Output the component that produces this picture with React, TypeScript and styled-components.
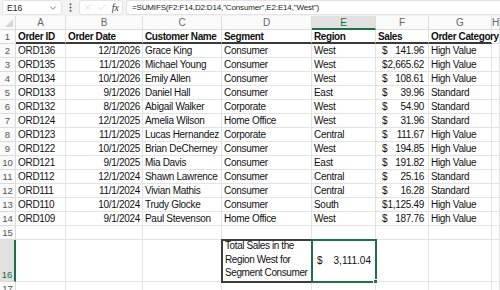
import React from 'react';
import styled, { createGlobalStyle } from 'styled-components';
import { ChevronDown, EllipsisVertical, X, Check } from 'lucide-react';

const GlobalStyle = createGlobalStyle`
  html, body {
    margin: 0;
    padding: 0;
    width: 500px;
    height: 290px;
    overflow: hidden;
    background: #ffffff;
  }
  * {
    box-sizing: border-box;
  }
`;

const COLUMNS = ['A', 'B', 'C', 'D', 'E', 'F', 'G', 'H'];

const ORDERS = [
  ['ORD136', '12/1/2026', 'Grace King', 'Consumer', 'West', '141.96', 'High Value'],
  ['ORD135', '11/1/2026', 'Michael Young', 'Consumer', 'West', '2,665.62', 'High Value'],
  ['ORD134', '10/1/2026', 'Emily Allen', 'Consumer', 'West', '108.61', 'High Value'],
  ['ORD133', '9/1/2026', 'Daniel Hall', 'Consumer', 'East', '39.96', 'Standard'],
  ['ORD132', '8/1/2026', 'Abigail Walker', 'Corporate', 'West', '54.90', 'Standard'],
  ['ORD124', '12/1/2025', 'Amelia Wilson', 'Home Office', 'West', '31.96', 'Standard'],
  ['ORD123', '11/1/2025', 'Lucas Hernandez', 'Corporate', 'Central', '111.67', 'High Value'],
  ['ORD122', '10/1/2025', 'Brian DeCherney', 'Consumer', 'West', '194.85', 'High Value'],
  ['ORD121', '9/1/2025', 'Mia Davis', 'Consumer', 'East', '191.82', 'High Value'],
  ['ORD112', '12/1/2024', 'Shawn Lawrence', 'Consumer', 'Central', '25.16', 'Standard'],
  ['ORD111', '11/1/2024', 'Vivian Mathis', 'Consumer', 'Central', '16.28', 'Standard'],
  ['ORD110', '10/1/2024', 'Trudy Glocke', 'Consumer', 'South', '1,125.49', 'High Value'],
  ['ORD109', '9/1/2024', 'Paul Stevenson', 'Home Office', 'West', '187.76', 'High Value'],
];

const HEADERS = ['Order ID', 'Order Date', 'Customer Name', 'Segment', 'Region', 'Sales', 'Order Category'];

const Frame = styled.div`
  display: flex;
  flex-direction: column;
  width: 500px;
  height: 290px;
  overflow: hidden;
  font-family: 'Liberation Sans', Arial, sans-serif;
  color: #1b1b1b;
`;

const FormulaBar = styled.div`
  display: flex;
  align-items: center;
  gap: 3px;
  height: 21px;
  padding: 0 0 1px 2px;
  background: #f3f3f3;
`;

const NameBox = styled.div`
  display: flex;
  align-items: center;
  justify-content: space-between;
  width: 60px;
  height: 15px;
  padding: 0 3px 0 4px;
  background: #ffffff;
  border: 1px solid #e3e3e3;
  border-radius: 3px;
  font-size: 8.5px;
  color: #222;
`;

const Dots = styled.div`
  display: flex;
  align-items: center;
  justify-content: center;
  width: 11px;
  color: #555;
`;

const FnButtons = styled.div`
  display: flex;
  align-items: center;
  gap: 4px;
  width: 44px;
  height: 15px;
  padding: 0 3px;
  background: #ffffff;
  border: 1px solid #e3e3e3;
  border-radius: 3px;
  color: #c4c4c4;
`;

const Fx = styled.span`
  font-family: 'Liberation Serif', 'Times New Roman', serif;
  font-style: italic;
  font-size: 10px;
  color: #333;
  margin-left: 1px;
`;

const FormulaInput = styled.div`
  flex: 1;
  display: flex;
  align-items: center;
  height: 15px;
  padding-left: 5px;
  background: #ffffff;
  border: 1px solid #e3e3e3;
  border-right: none;
  border-radius: 3px 0 0 3px;
  font-size: 8px;
  letter-spacing: -0.15px;
  color: #222;
  white-space: nowrap;
`;

const Sheet = styled.div`
  display: grid;
  grid-template-columns: 16px 50px 77px 79px 90px 64px 53px 63px 1fr;
  grid-template-rows: 14px repeat(15, 14px) 42px 14px;
  background: #ffffff;
  font-size: 10px;
`;

const Corner = styled.div`
  position: relative;
  background: #fafafa;
  border-right: 1px solid #dcdcdc;
  border-bottom: 1px solid #dcdcdc;
  &::after {
    content: '';
    position: absolute;
    right: 2px;
    bottom: 2px;
    border-left: 8px solid transparent;
    border-bottom: 8px solid #d6d6d6;
  }
`;

const ColHead = styled.div<{ $active?: boolean }>`
  display: flex;
  align-items: center;
  justify-content: center;
  background: ${(p) => (p.$active ? '#e1e1e1' : '#fafafa')};
  border-right: 1px solid #dcdcdc;
  border-bottom: ${(p) => (p.$active ? '2px solid #1e7145' : '1px solid #dcdcdc')};
  color: ${(p) => (p.$active ? '#1e6b3f' : '#666')};
  font-size: 10px;
`;

const RowHead = styled.div<{ $active?: boolean }>`
  display: flex;
  align-items: ${(p) => (p.$active ? 'flex-end' : 'center')};
  justify-content: center;
  padding-bottom: ${(p) => (p.$active ? '1px' : '0')};
  background: ${(p) => (p.$active ? '#e1e1e1' : '#fafafa')};
  border-right: ${(p) => (p.$active ? '2px solid #1e7145' : '1px solid #dcdcdc')};
  border-bottom: 1px solid #dcdcdc;
  color: ${(p) => (p.$active ? '#1e6b3f' : '#555')};
  font-size: 9.5px;
`;

const Cell = styled.div<{ $right?: boolean; $bold?: boolean; $rule?: boolean }>`
  display: flex;
  align-items: center;
  justify-content: ${(p) => (p.$right ? 'flex-end' : 'flex-start')};
  padding: 0 2px;
  white-space: nowrap;
  overflow: visible;
  border-right: 1px solid #e3e3e3;
  border-bottom: ${(p) => (p.$rule ? '2px solid #3a3a3a' : '1px solid #e3e3e3')};
  font-weight: ${(p) => (p.$bold ? 700 : 400)};
  letter-spacing: ${(p) => (p.$bold ? '-0.4px' : '-0.3px')};
  color: #111;
`;

const MoneyCell = styled(Cell)`
  justify-content: space-between;
  padding: 0 4px 0 6px;
`;

const NoteCell = styled(Cell)`
  align-items: flex-end;
  white-space: normal;
  line-height: 13.6px;
  padding: 0 1px 1px 3px;
  letter-spacing: -0.4px;
  outline: 2px solid #3c3c3c;
  outline-offset: -1px;
  z-index: 1;
`;

const ResultCell = styled(MoneyCell)`
  position: relative;
  padding: 0 4px 0 5px;
  outline: 2px solid #1e7145;
  outline-offset: -1px;
  z-index: 2;
  letter-spacing: 0;
`;

const FillHandle = styled.span`
  position: absolute;
  right: -3px;
  bottom: -3px;
  width: 5px;
  height: 5px;
  background: #1e7145;
  border: 1px solid #ffffff;
`;

const Money = ({ value }: { value: string }) => (
  <>
    <span>$</span>
    <span>{value}</span>
  </>
);

export default function App() {
  return (
    <>
      <GlobalStyle />
      <Frame>
        <FormulaBar>
          <NameBox>
            E16
            <ChevronDown size={10} strokeWidth={1.6} color="#444" />
          </NameBox>
          <Dots>
            <EllipsisVertical size={11} strokeWidth={2.2} />
          </Dots>
          <FnButtons>
            <X size={11} strokeWidth={1.3} />
            <Check size={11} strokeWidth={1.3} />
            <Fx>fx</Fx>
          </FnButtons>
          <FormulaInput>=SUMIFS(F2:F14,D2:D14,"Consumer",E2:E14,"West")</FormulaInput>
        </FormulaBar>

        <Sheet>
          <Corner />
          {COLUMNS.map((c) => (
            <ColHead key={c} $active={c === 'E'}>
              {c}
            </ColHead>
          ))}

          <RowHead>1</RowHead>
          {HEADERS.map((h) => (
            <Cell key={h} $bold $rule>
              {h}
            </Cell>
          ))}
          <Cell />

          {ORDERS.map((o, i) => (
            <React.Fragment key={o[0]}>
              <RowHead>{i + 2}</RowHead>
              <Cell>{o[0]}</Cell>
              <Cell $right>{o[1]}</Cell>
              <Cell>{o[2]}</Cell>
              <Cell>{o[3]}</Cell>
              <Cell>{o[4]}</Cell>
              <MoneyCell>
                <Money value={o[5]} />
              </MoneyCell>
              <Cell>{o[6]}</Cell>
              <Cell />
            </React.Fragment>
          ))}

          <RowHead>15</RowHead>
          {COLUMNS.map((c) => (
            <Cell key={c} />
          ))}

          <RowHead $active>16</RowHead>
          <Cell />
          <Cell />
          <Cell />
          <NoteCell>Total Sales in the Region West for Segment Consumer</NoteCell>
          <ResultCell>
            <Money value="3,111.04" />
            <FillHandle />
          </ResultCell>
          <Cell />
          <Cell />
          <Cell />

          <RowHead>17</RowHead>
          {COLUMNS.map((c) => (
            <Cell key={c} />
          ))}
        </Sheet>
      </Frame>
    </>
  );
}
